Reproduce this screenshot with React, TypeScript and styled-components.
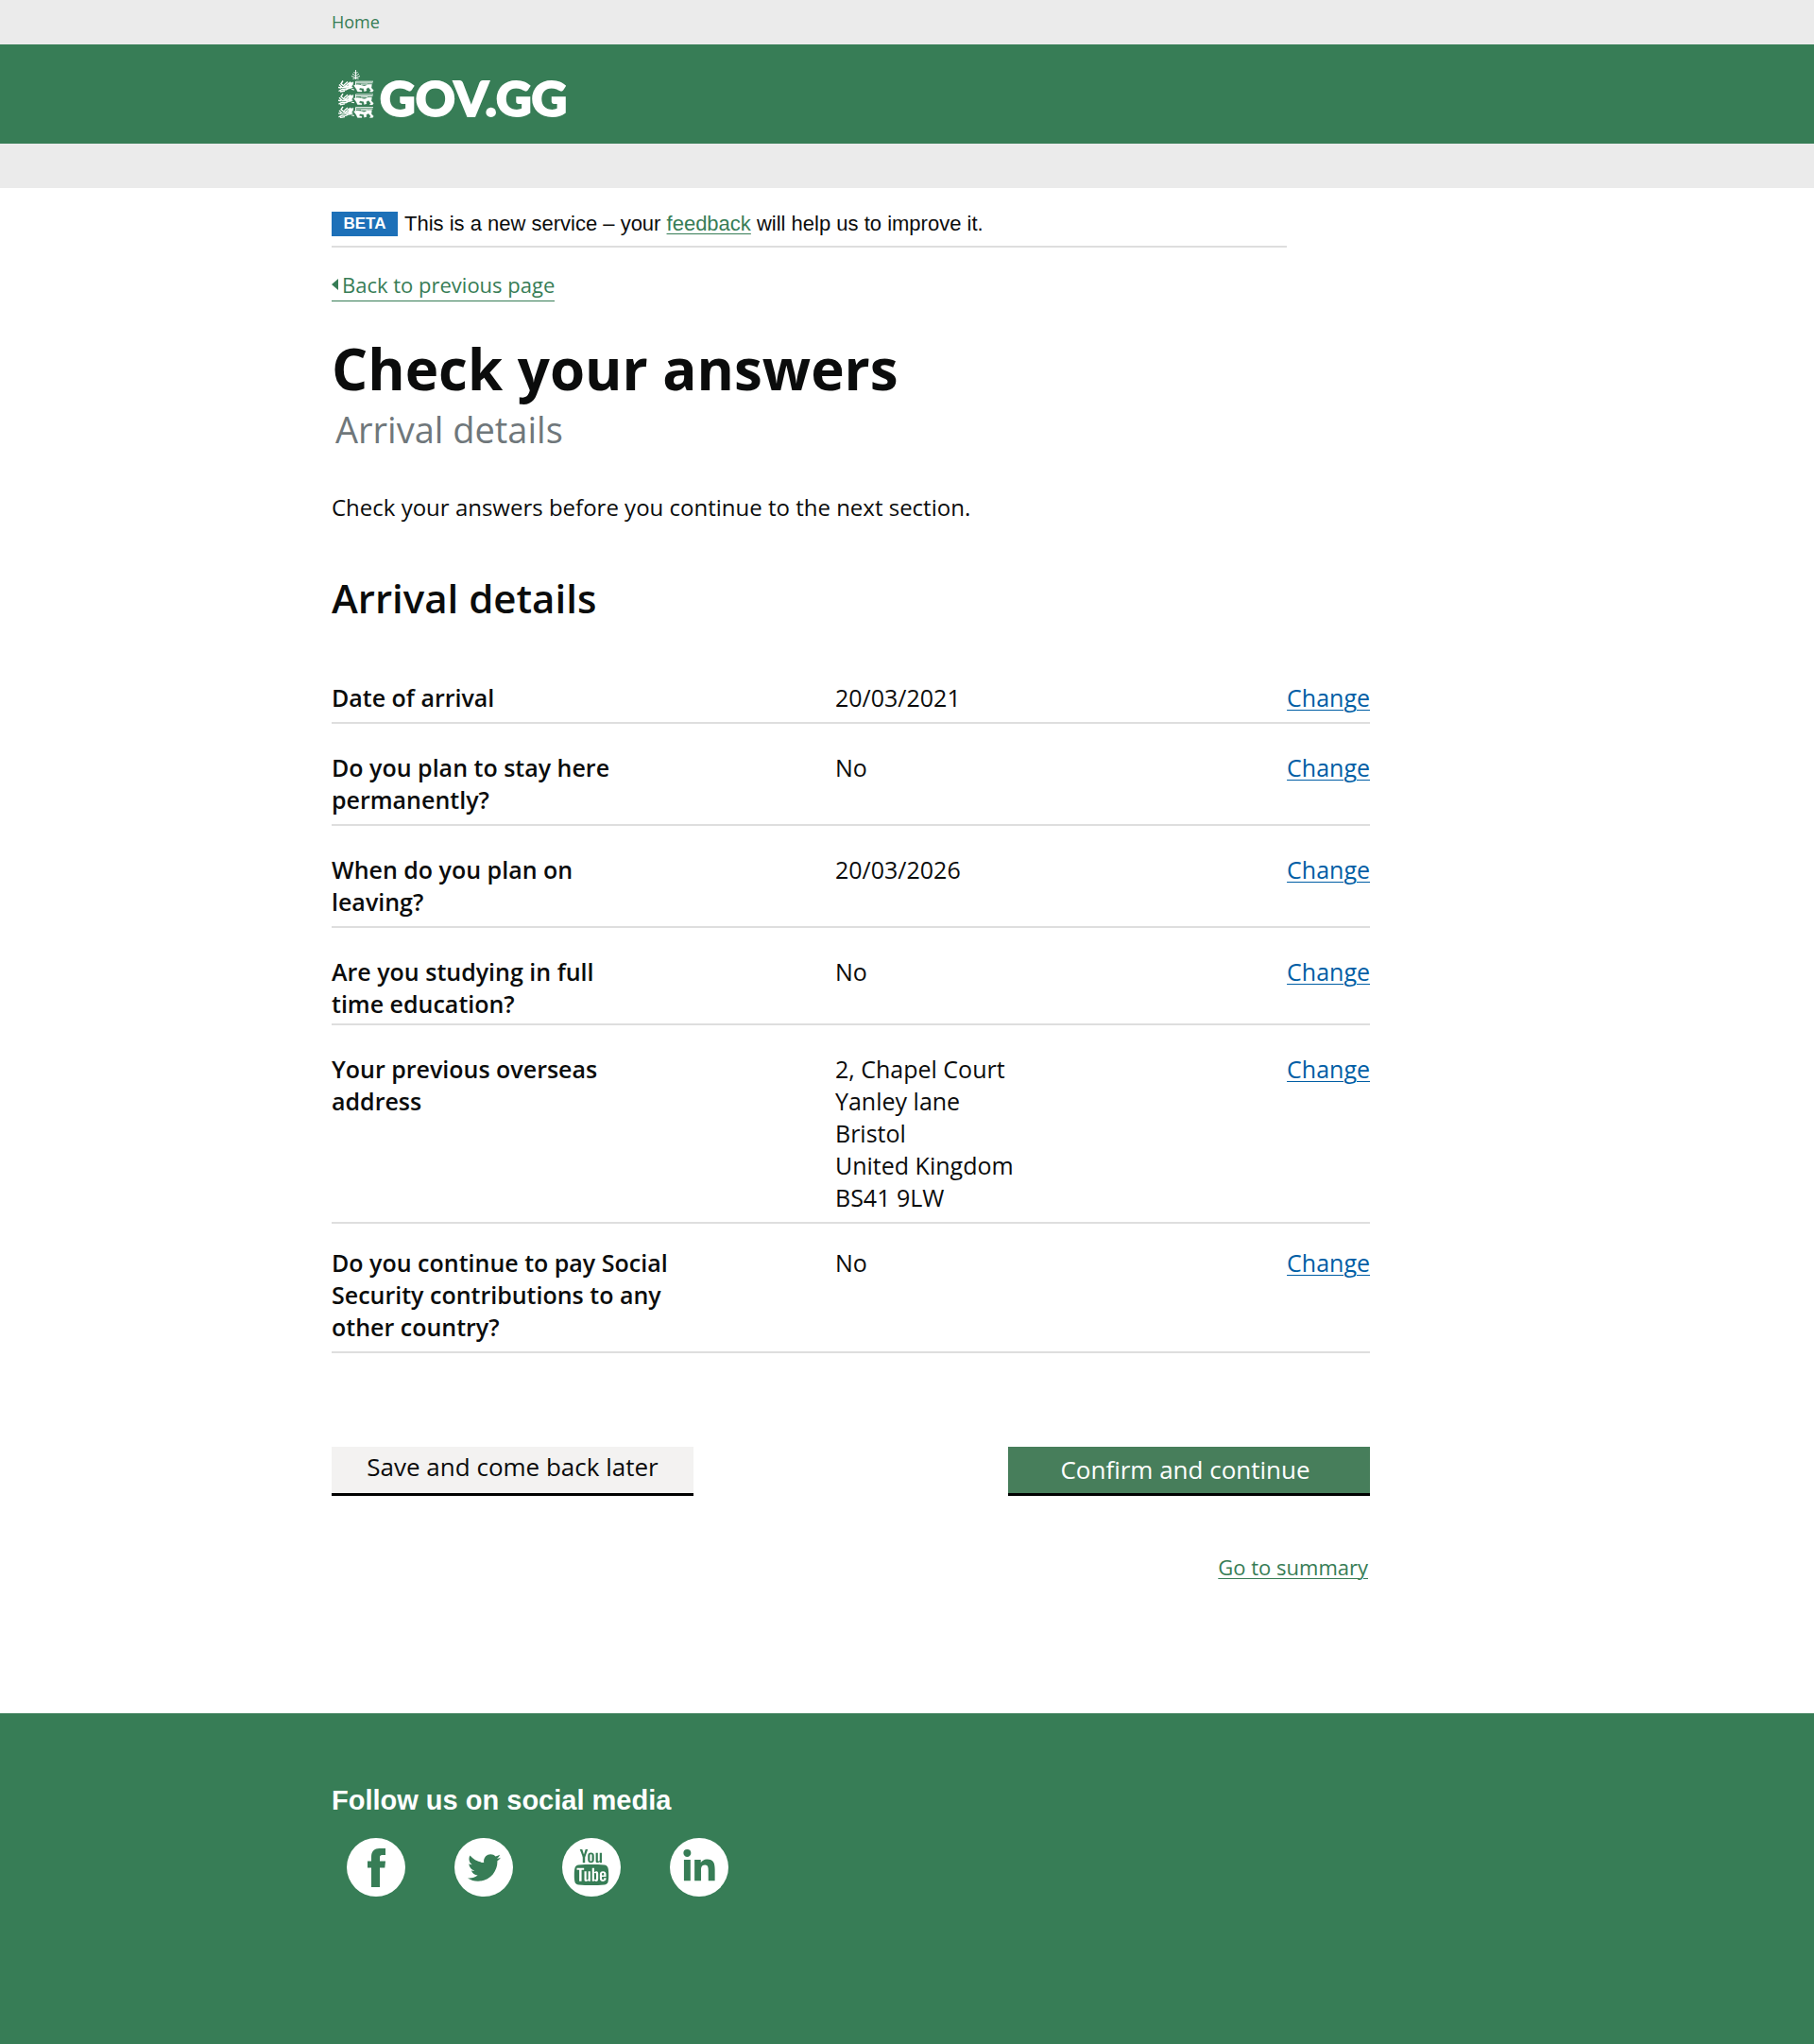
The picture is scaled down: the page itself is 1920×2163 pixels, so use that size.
import React from "react";
import styled, { createGlobalStyle } from "styled-components";
import { FaLinkedinIn, FaTwitter } from "react-icons/fa";
import { TfiYoutube } from "react-icons/tfi";

const GlobalStyle = createGlobalStyle`
  *, *::before, *::after { box-sizing: border-box; }
  body {
    margin: 0;
    background: #fff;
    color: #0b0c0c;
    font-family: "Open Sans", "Noto Sans", sans-serif;
  }
`;

const green = "#377d56";
const rule = "#dedede";
const arial = `"Liberation Sans", Arial, sans-serif`;

const Page = styled.div`
  min-height: 100vh;
  display: flex;
  flex-direction: column;
`;

const Container = styled.div`
  width: 100%;
  max-width: 1218px;
  margin: 0 auto;
  padding-right: 119px;
`;

const Breadcrumbs = styled.nav`
  background: #ebebeb;
  font-size: 18px;
  line-height: 24px;
  padding: 11px 0 12px;
`;

const CrumbLink = styled.a`
  color: ${green};
  text-decoration: none;
`;

const Header = styled.header`
  background: ${green};
  padding: 27px 0;
`;

const Brand = styled.a`
  display: inline-flex;
  align-items: flex-end;
  gap: 6px;
  height: 51px;
  padding-left: 7px;
  color: #fff;
  text-decoration: none;
  vertical-align: top;
`;

const Wordmark = styled.span`
  font-family: Lato, sans-serif;
  font-weight: 900;
  font-size: 52px;
  line-height: 44px;
  -webkit-text-stroke: 2px #fff;
`;

const Strip = styled.div`
  height: 47px;
  background: #ebebeb;
`;

const Main = styled.main`
  flex: 1;
  padding: 25px 0 124px;
`;

const PhaseBanner = styled.div`
  display: flex;
  align-items: center;
  gap: 7px;
  max-width: 1011px;
  padding-bottom: 10px;
  border-bottom: 2px solid ${rule};
  font-family: ${arial};
  font-size: 22px;
  line-height: 26px;
`;

const Tag = styled.strong`
  width: 70px;
  background: #1d70b8;
  color: #fff;
  font-size: 17px;
  text-align: center;
`;

const GreenLink = styled.a`
  color: ${green};
  text-underline-offset: 3px;
  text-decoration-thickness: 1px;
`;

const BackLink = styled.a`
  display: inline-flex;
  align-items: center;
  gap: 4px;
  margin-top: 24px;
  padding-bottom: 2px;
  border-bottom: 1px solid ${green};
  color: ${green};
  font-size: 22px;
  line-height: 30px;
  text-decoration: none;

  &::before {
    content: "";
    border: 6px solid transparent;
    border-left: 0;
    border-right: 7px solid ${green};
  }
`;

const Title = styled.h1`
  margin: 30px 0 0;
  font-size: 60px;
  line-height: 82px;
  font-weight: 700;
`;

const Caption = styled.p`
  margin: 0;
  padding-left: 4px;
  color: #6f777b;
  font-size: 38px;
  line-height: 46px;
`;

const Lead = styled.p`
  margin: 43px 0 0;
  font-size: 24px;
  line-height: 34px;
`;

const SectionTitle = styled.h2`
  margin: 50px 0 0;
  font-size: 42px;
  line-height: 58px;
  font-weight: 600;
`;

const Summary = styled.dl`
  margin: 45px 0 0;
  font-size: 25px;
  line-height: 34px;
`;

const Row = styled.div<{ $top: number; $bottom: number }>`
  display: grid;
  grid-template-columns: 533px 1fr auto;
  padding: ${(p) => p.$top}px 0 ${(p) => p.$bottom}px;
  border-bottom: 2px solid ${rule};
`;

const Question = styled.dt<{ $wide?: boolean }>`
  max-width: ${(p) => (p.$wide ? 380 : 300)}px;
  font-weight: 600;
`;

const Answer = styled.dd`
  margin: 0;
  white-space: pre-line;
`;

const ChangeLink = styled.a`
  color: #005ea5;
  text-underline-offset: 3px;
  text-decoration-thickness: 1px;
`;

const Actions = styled.div`
  display: flex;
  justify-content: space-between;
  margin-top: 99px;
`;

const Button = styled.button<{ $primary?: boolean }>`
  width: 383px;
  padding: ${(p) => (p.$primary ? "7px 28px 7px 20px" : "4px 20px 10px")};
  border: 0;
  border-bottom: 3px solid #000;
  background: ${(p) => (p.$primary ? "#477e5b" : "#f3f2f1")};
  color: ${(p) => (p.$primary ? "#fff" : "#0b0c0c")};
  font: 26px/35px "Open Sans", "Noto Sans", sans-serif;
  cursor: pointer;
`;

const SummaryLinkRow = styled.div`
  display: flex;
  justify-content: flex-end;
  margin-top: 60px;
  padding-right: 2px;
  font-size: 22px;
  line-height: 30px;
`;

const Footer = styled.footer`
  background: ${green};
  color: #fff;
  padding: 76px 0 156px;
`;

const FooterTitle = styled.h2`
  margin: 0;
  font-family: ${arial};
  font-size: 29px;
  line-height: 32px;
`;

const SocialList = styled.ul`
  display: flex;
  gap: 52px;
  margin: 24px 0 0;
  padding: 0 0 0 16px;
  list-style: none;
`;

const SocialLink = styled.a`
  display: flex;
  align-items: center;
  justify-content: center;
  width: 62px;
  height: 62px;
  border-radius: 50%;
  background: #fff;
  color: ${green};
`;

const YoutubeMark = styled(TfiYoutube)`
  width: 44px;
  height: 38px;
`;

const rows = [
  { q: "Date of arrival", a: "20/03/2021", top: 14, bottom: 9 },
  { q: "Do you plan to stay here permanently?", a: "No", top: 29, bottom: 9 },
  { q: "When do you plan on leaving?", a: "20/03/2026", top: 29, bottom: 9 },
  { q: "Are you studying in full time education?", a: "No", top: 29, bottom: 4 },
  {
    q: "Your previous overseas address",
    a: "2, Chapel Court\nYanley lane\nBristol\nUnited Kingdom\nBS41 9LW",
    top: 29,
    bottom: 9,
  },
  {
    q: "Do you continue to pay Social Security contributions to any other country?",
    a: "No",
    top: 24,
    bottom: 9,
    wide: true,
  },
];

function FacebookMark() {
  return (
    <svg width="19" height="41" viewBox="0 0 19 41" fill="currentColor" aria-hidden="true">
      <path d="M4 41V20.5H0v-7h4V9c0-6 3.500-9 8.500-9H19v7h-3.500C13.600 7 13 8 13 9.600v3.900h6l-.7 7H13V41z" />
    </svg>
  );
}

const socials = [
  { name: "Facebook", icon: <FacebookMark /> },
  { name: "Twitter", icon: <FaTwitter size={35} /> },
  { name: "YouTube", icon: <YoutubeMark preserveAspectRatio="none" /> },
  { name: "LinkedIn", icon: <FaLinkedinIn size={38} /> },
];

/* A walking lion, facing out, with raised forepaw and tail carried over its back. */
function Lion({ y }: { y: number }) {
  return (
    <g transform={`translate(0 ${y})`}>
      <path
        d="M5 .5 3 3.500 6 6 11 6.500M1 4.500l3 3 6 .5M0 7.500l3 .5M.5 11.500 4 9.500l4 .5 4-2M2 12l5-.8"
        strokeWidth="1.400"
      />
      <path d="M6 5 10 1.500M7 7l4-4" strokeWidth="1.300" />
      <path d="M11 2.500l2-1 1 1 2-.7-.5 2.700-1.500 2 1.500 1-3 1.500-2-1z" fill="#fff" strokeWidth=".4" />
      <path d="M18.500 5V1.200H37M19 2.800H36.500" strokeWidth=".9" />
      <path
        d="M16.500 5.500C20 3.600 24 5 27 6c2 .6 3-1.800 5-1.800h3.500L35 8l2.300 2.500-1 1.700h-3l1.200-1.700L32 7.500 29.500 9 30 11l-2.500.8-.5-3-4-.8-1 2 3 .8v1.200h-4.500l-1.500-3z"
        fill="#fff"
        strokeWidth=".3"
      />
      <path d="M14 9.500l3 .5" strokeWidth="1" />
      <path d="M24 4.300 31 4" strokeWidth=".8" />
    </g>
  );
}

function Crest() {
  return (
    <svg width="38" height="51" viewBox="0 0 38 51" fill="none" stroke="#fff" aria-hidden="true">
      <path
        d="M18.500 0v10M18.500 8.500 14 6.500M18.500 8.500l4.500-2M18.500 6.500 15 4M18.500 6.500l3.500-2.500M16.500 2l2 2 2-2M15.500 9.500l3-1 3 1"
        strokeWidth=".9"
      />
      <Lion y={11} />
      <Lion y={24.700} />
      <Lion y={38.400} />
    </svg>
  );
}

export default function App() {
  return (
    <Page>
      <GlobalStyle />
      <Breadcrumbs aria-label="Breadcrumb">
        <Container>
          <CrumbLink href="#home">Home</CrumbLink>
        </Container>
      </Breadcrumbs>
      <Header>
        <Container>
          <Brand href="#home">
            <Crest />
            <Wordmark>GOV.GG</Wordmark>
          </Brand>
        </Container>
      </Header>
      <Strip />
      <Main>
        <Container>
          <PhaseBanner>
            <Tag>BETA</Tag>
            <span>
              This is a new service – your <GreenLink href="#feedback">feedback</GreenLink> will help us to improve it.
            </span>
          </PhaseBanner>
          <BackLink href="#back">Back to previous page</BackLink>
          <Title>Check your answers</Title>
          <Caption>Arrival details</Caption>
          <Lead>Check your answers before you continue to the next section.</Lead>
          <SectionTitle>Arrival details</SectionTitle>
          <Summary>
            {rows.map((r) => (
              <Row key={r.q} $top={r.top} $bottom={r.bottom}>
                <Question $wide={r.wide}>{r.q}</Question>
                <Answer>{r.a}</Answer>
                <Answer>
                  <ChangeLink href="#change" aria-label={`Change: ${r.q}`}>Change</ChangeLink>
                </Answer>
              </Row>
            ))}
          </Summary>
          <Actions>
            <Button type="button">Save and come back later</Button>
            <Button type="button" $primary>Confirm and continue</Button>
          </Actions>
          <SummaryLinkRow>
            <GreenLink href="#summary">Go to summary</GreenLink>
          </SummaryLinkRow>
        </Container>
      </Main>
      <Footer>
        <Container>
          <FooterTitle>Follow us on social media</FooterTitle>
          <SocialList>
            {socials.map((s) => (
              <li key={s.name}>
                <SocialLink href={`#${s.name.toLowerCase()}`} aria-label={s.name}>{s.icon}</SocialLink>
              </li>
            ))}
          </SocialList>
        </Container>
      </Footer>
    </Page>
  );
}
